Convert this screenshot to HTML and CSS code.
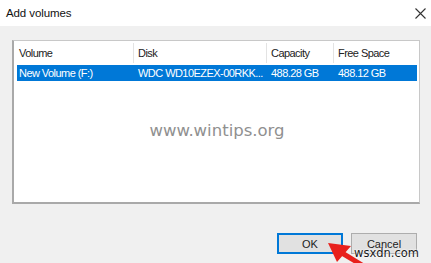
FILE: index.html
```html
<!DOCTYPE html>
<html lang="en">
<head>
    <meta charset="UTF-8">
    <meta name="viewport" content="width=device-width, initial-scale=1.0">
    <title>Add volumes</title>
    <link rel="stylesheet" href="styles.css">
</head>
<body>
    <div class="dialog">
        <div class="titlebar">
            <span class="title">Add volumes</span>
            <span class="close">
                <svg width="11" height="11" viewBox="0 0 11 11"><path d="M0.5 0.5 L10.5 10.5 M10.5 0.5 L0.5 10.5" stroke="#333" stroke-width="1.1" fill="none"/></svg>
            </span>
        </div>
        <div class="content">
            <div class="listview">
                <div class="header">
                    <div class="col col-volume">Volume</div>
                    <div class="col col-disk">Disk</div>
                    <div class="col col-capacity">Capacity</div>
                    <div class="col col-free">Free Space</div>
                </div>
                <div class="row selected">
                    <div class="col col-volume">New Volume (F:)</div>
                    <div class="col col-disk">WDC WD10EZEX-00RKK...</div>
                    <div class="col col-capacity">488.28 GB</div>
                    <div class="col col-free">488.12 GB</div>
                </div>
                <div class="watermark">www.wintips.org</div>
            </div>
            <div class="buttons">
                <button class="btn btn-default">OK</button>
                <button class="btn">Cancel</button>
            </div>
        </div>
        <svg class="arrow" width="60" height="30" viewBox="0 0 60 30">
            <line x1="22" y1="17" x2="50" y2="34" stroke="#e8201c" stroke-width="5"/>
            <polygon points="8,7 31,10 17,26" fill="#e8201c"/>
        </svg>
        <div class="stamp">wsxdn.com</div>
    </div>
</body>
</html>
```
FILE: styles.css
```css
html, body {
    margin: 0;
    padding: 0;
}
body {
    font-family: 'Liberation Sans', Arial, sans-serif;
    background-color: #f0f0f0;
    color: #000;
    width: 431px;
    height: 263px;
    overflow: hidden;
}
.dialog {
    position: relative;
    height: 263px;
    display: flex;
    flex-direction: column;
}
.titlebar {
    height: 26px;
    background-color: #fff;
    display: flex;
    align-items: center;
    justify-content: space-between;
    padding: 0 5px 0 6px;
}
.title {
    font-size: 11.5px;
    color: #111;
    letter-spacing: -0.1px;
}
.close {
    display: flex;
    width: 11px;
    height: 11px;
}
.content {
    flex: 1;
    padding: 14px 14px 0 12px;
}
.listview {
    height: 159px;
    background-color: #fff;
    border-top: 1px solid #c8c8c8;
    border-right: 1px solid #c8c8c8;
    border-left: 2px solid #a9a9a9;
    border-bottom: 2px solid #a9a9a9;
    padding: 2px 2px 0 3px;
    margin-right: -3px;
}
.header, .row {
    display: flex;
    font-size: 11px;
    letter-spacing: -0.55px;
    white-space: nowrap;
}
.header {
    height: 20px;
    color: #222;
}
.header .col {
    border-right: 1px solid #e3e3e3;
}
.col {
    display: flex;
    align-items: center;
    padding-left: 4px;
    box-sizing: border-box;
    overflow: hidden;
}
.col-volume {
    width: 117px;
    padding-left: 2px;
}
.col-disk {
    width: 133px;
}
.col-capacity {
    width: 67px;
}
.col-free {
    flex: 1;
    border-right: none !important;
}
.row {
    height: 16px;
    margin-top: 2px;
}
.selected {
    background-color: #0078d7;
    color: #fff;
}
.watermark {
    text-align: center;
    font-family: 'DejaVu Sans', sans-serif;
    font-size: 16.5px;
    color: #909090;
    padding-top: 40px;
}
.buttons {
    display: flex;
    justify-content: flex-end;
    gap: 8px;
    margin-top: 29px;
}
.btn {
    width: 66px;
    height: 21px;
    font-family: 'Liberation Sans', Arial, sans-serif;
    font-size: 11px;
    color: #222;
    background-color: #e1e1e1;
    border: 1px solid #adadad;
    padding: 0;
}
.btn-default {
    border: 2px solid #0078d7;
}
.arrow {
    position: absolute;
    left: 320px;
    top: 236px;
}
.stamp {
    position: absolute;
    left: 354px;
    top: 246px;
    font-family: 'DejaVu Sans', sans-serif;
    font-size: 11.5px;
    color: #1a1a1a;
    text-shadow: 0 0 2px #fff, 0 0 2px #fff;
}
```
